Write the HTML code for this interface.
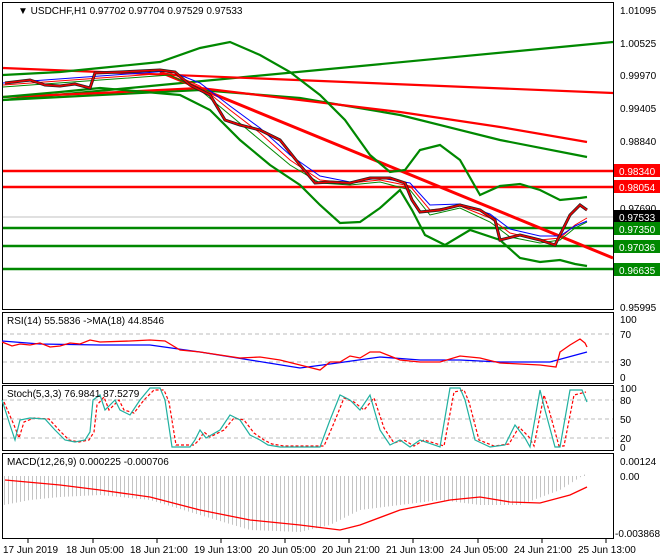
<!DOCTYPE html>
<html><head><meta charset="utf-8"><style>
html,body{margin:0;padding:0;background:#fff;}
svg{display:block;font-family:"Liberation Sans",sans-serif;font-size:10px;}
</style></head><body>
<svg width="660" height="560" viewBox="0 0 660 560" xmlns="http://www.w3.org/2000/svg">
<defs>
<pattern id="hb" width="4" height="10" patternUnits="userSpaceOnUse"><rect x="0" y="0" width="1" height="10" fill="#c4c4c4"/></pattern>
</defs>
<rect width="660" height="560" fill="#fff"/>
<g fill="none" stroke="#000" stroke-width="1">
<rect x="2.5" y="2.5" width="611" height="307"/>
<rect x="2.5" y="312.5" width="611" height="71"/>
<rect x="2.5" y="385.5" width="611" height="65"/>
<rect x="2.5" y="453.5" width="611" height="85"/>
</g>
<line x1="3" y1="217" x2="613" y2="217" stroke="#c0c0c0"/>
<g fill="none" stroke-width="2.2">
<line x1="3" y1="171" x2="613" y2="171" stroke="#f00" stroke-width="2.5"/>
<line x1="3" y1="187" x2="613" y2="187" stroke="#f00" stroke-width="2.5"/>
<line x1="3" y1="228" x2="613" y2="228" stroke="#080" stroke-width="2.5"/>
<line x1="3" y1="246" x2="613" y2="246" stroke="#080" stroke-width="2.5"/>
<line x1="3" y1="269" x2="613" y2="269" stroke="#080" stroke-width="2.5"/>
<line x1="3" y1="100" x2="613" y2="42" stroke="#080"/>
<line x1="3" y1="68" x2="613" y2="93" stroke="#f00"/>
<line x1="160" y1="72" x2="613" y2="258" stroke="#f00" stroke-width="3"/>
<polyline stroke="#080" points="3,100 100,95 200,90 300,98 400,115 500,140 587,157"/>
<polyline stroke="#f00" points="3,97 100,93 200,88 300,100 400,112 500,127 587,142"/>
<polyline stroke="#080" points="3,75 60,72 100,68 160,62 200,48 230,42 260,55 290,72 320,95 345,120 370,155 390,172 405,170 420,150 440,145 460,160 480,195 500,186 520,184 540,190 560,200 580,198 587,197"/>
<polyline stroke="#080" points="3,97 60,92 100,88 180,95 210,110 240,140 270,165 300,185 320,205 340,223 360,222 380,208 400,190 412,210 425,235 445,245 470,230 500,240 520,258 540,262 560,260 575,264 587,266"/>
<polyline stroke="#080" stroke-width="1" points="3,87 100,80 170,75 200,90 230,115 260,140 290,165 320,183 350,185 380,182 410,190 430,215 460,208 490,222 510,237 540,243 560,240 575,228 587,222"/>
<polyline stroke="#f00" stroke-width="1" points="3,85 100,78 170,73 200,86 230,110 260,133 290,160 320,180 350,183 380,180 410,186 430,210 460,206 490,218 510,233 540,240 560,238 575,225 587,218"/>
<polyline stroke="#00f" stroke-width="1" points="3,83 100,76 170,71 200,83 230,106 260,128 290,155 320,176 350,182 380,178 410,183 430,205 460,204 490,214 510,229 540,236 560,236 575,226 587,221"/>
</g>
<polyline fill="none" stroke="#222" stroke-width="3" points="5,83 30,80 45,85 60,86 75,84 90,88 95,73 120,72 160,70 175,72 190,85 210,95 225,120 240,125 260,130 280,140 300,165 315,183 330,182 350,183 370,178 390,178 405,183 412,200 420,212 440,210 460,205 480,210 495,220 500,240 520,235 540,240 555,245 560,235 570,215 580,205 587,210"/>
<polyline fill="none" stroke="#e00" stroke-width="1.5" points="5,83 30,80 45,85 60,86 75,84 90,88 95,73 120,72 160,70 175,72 190,85 210,95 225,120 240,125 260,130 280,140 300,165 315,183 330,182 350,183 370,178 390,178 405,183 412,200 420,212 440,210 460,205 480,210 495,220 500,240 520,235 540,240 555,245 560,235 570,215 580,205 587,210"/>
<text x="18" y="14" font-size="10">▼ USDCHF,H1  0.97702 0.97704 0.97529 0.97533</text>
<g font-size="10" fill="#000">
<text x="620" y="14">1.01095</text>
<text x="620" y="47">1.00525</text>
<text x="620" y="79">0.99970</text>
<text x="620" y="112">0.99405</text>
<text x="620" y="145">0.98840</text>
<text x="620" y="212">0.97690</text>
<text x="620" y="311">0.95995</text>
</g>
<g font-size="10">
<rect x="614" y="164" width="46" height="13" fill="#f00"/><text x="619" y="175" fill="#fff">0.98340</text>
<rect x="614" y="180" width="46" height="13" fill="#f00"/><text x="619" y="191" fill="#fff">0.98054</text>
<rect x="614" y="210" width="46" height="13" fill="#000"/><text x="619" y="221" fill="#fff">0.97533</text>
<rect x="614" y="222" width="46" height="13" fill="#080"/><text x="619" y="233" fill="#fff">0.97350</text>
<rect x="614" y="240" width="46" height="13" fill="#080"/><text x="619" y="251" fill="#fff">0.97036</text>
<rect x="614" y="263" width="46" height="13" fill="#080"/><text x="619" y="274" fill="#fff">0.96635</text>
</g>
<g stroke="#bbb" stroke-dasharray="4,3"><line x1="3" y1="334" x2="613" y2="334"/><line x1="3" y1="362" x2="613" y2="362"/></g>
<polyline fill="none" stroke="#00f" stroke-width="1.3" points="2,341 40,344 100,345 150,345 200,352 250,360 300,368 330,364 380,357 420,360 460,360 500,362 550,362 587,352"/>
<polyline fill="none" stroke="#f00" stroke-width="1.3" points="2,342 12,346 20,344 30,345 40,343 50,347 60,346 70,343 80,344 90,340 100,342 130,341 150,340 165,341 180,350 200,352 220,355 240,358 260,357 280,360 300,365 320,370 330,362 340,362 350,356 360,358 370,352 380,352 390,356 400,360 420,362 440,362 460,356 480,358 500,363 520,364 540,365 556,367 560,352 570,345 580,339 585,343 587,347"/>
<text x="7" y="324">RSI(14) 55.5836  -&gt;MA(18) 44.8546</text>
<g font-size="10"><text x="620" y="323">100</text><text x="620" y="338">70</text><text x="620" y="366">30</text><text x="620" y="381">0</text></g>
<g stroke="#bbb" stroke-dasharray="4,3"><line x1="3" y1="400" x2="613" y2="400"/><line x1="3" y1="419" x2="613" y2="419"/><line x1="3" y1="438" x2="613" y2="438"/></g>
<polyline fill="none" stroke="#f00" stroke-dasharray="3,2" stroke-width="1.2" points="4,402 14,425 19,438 24,422 34,418 49,419 59,430 69,440 79,442 89,440 94,432 97,405 104,397 109,410 119,400 124,410 134,413 144,400 154,390 164,390 169,402 176,445 194,445 199,440 204,432 210,437 224,430 234,418 244,420 254,433 264,440 272,444 284,446 324,446 334,423 344,398 354,402 364,410 374,398 384,428 394,443 404,440 414,446 424,440 444,446 454,392 464,390 469,402 479,440 494,446 509,444 519,427 529,437 534,446 544,395 549,410 559,446 564,446 574,395 586,392"/>
<polyline fill="none" stroke="#20b0a0" stroke-width="1.2" points="2,400 10,425 15,440 20,420 30,418 45,419 55,430 65,440 75,442 85,440 90,432 93,400 100,395 105,410 115,400 120,410 130,415 140,400 150,388 160,388 165,400 172,447 190,447 195,440 200,430 206,438 220,430 230,415 240,420 250,435 260,440 268,445 280,447 320,447 330,420 340,395 350,400 360,410 370,395 380,430 390,445 400,440 410,447 420,440 440,447 450,388 460,388 465,400 475,440 490,447 505,445 515,425 525,438 530,447 540,390 545,410 555,447 560,447 570,390 582,390 587,402"/>
<text x="7" y="397">Stoch(5,3,3) 76.9841 87.5279</text>
<g font-size="10"><text x="620" y="392">100</text><text x="620" y="404">80</text><text x="620" y="423">50</text><text x="620" y="442">20</text><text x="620" y="451">0</text></g>
<polygon fill="url(#hb)" points="4,476 4,505 30,500 60,497 100,495 150,500 200,515 250,530 300,532 330,525 360,510 400,505 440,500 480,505 520,505 560,490 587,473 587,476"/>
<polyline fill="none" stroke="#f00" stroke-width="1.3" points="5,480 60,485 100,490 150,497 200,510 250,520 300,525 340,530 360,525 400,510 450,500 480,497 510,502 540,503 570,495 587,487"/>
<text x="7" y="465">MACD(12,26,9) 0.000225 -0.000706</text>
<g font-size="10"><text x="620" y="465">0.00124</text><text x="620" y="480">0.00</text><text x="615" y="537">-0.003868</text></g>
<g stroke="#000"><line x1="28" y1="539" x2="28" y2="543"/><line x1="93" y1="539" x2="93" y2="543"/><line x1="157" y1="539" x2="157" y2="543"/><line x1="221" y1="539" x2="221" y2="543"/><line x1="285" y1="539" x2="285" y2="543"/><line x1="349" y1="539" x2="349" y2="543"/><line x1="413" y1="539" x2="413" y2="543"/><line x1="478" y1="539" x2="478" y2="543"/><line x1="542" y1="539" x2="542" y2="543"/><line x1="606" y1="539" x2="606" y2="543"/></g>
<g font-size="10"><text x="3" y="553">17 Jun 2019</text><text x="66" y="553">18 Jun 05:00</text><text x="130" y="553">18 Jun 21:00</text><text x="194" y="553">19 Jun 13:00</text><text x="258" y="553">20 Jun 05:00</text><text x="322" y="553">20 Jun 21:00</text><text x="386" y="553">21 Jun 13:00</text><text x="450" y="553">24 Jun 05:00</text><text x="514" y="553">24 Jun 21:00</text><text x="578" y="553">25 Jun 13:00</text></g>
</svg>
</body></html>
